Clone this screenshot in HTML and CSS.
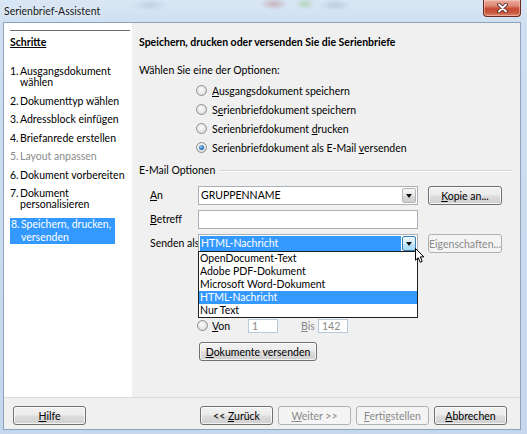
FILE: index.html
```html
<!DOCTYPE html>
<html lang="de">
<head>
<meta charset="utf-8">
<title>Serienbrief-Assistent</title>
<link rel="stylesheet" href="styles.css">
</head>
<body>
<div class="window">
  <div class="titlebar">
    <span class="title">Serienbrief-Assistent</span>
    <button class="close" aria-label="Schließen">
      <svg width="11" height="10" viewBox="0 0 11 10">
        <path d="M2 1.5 L9 8.5 M9 1.5 L2 8.5" stroke="#4a1c16" stroke-width="3.6" stroke-linecap="round"/>
        <path d="M2 1.5 L9 8.5 M9 1.5 L2 8.5" stroke="#ffffff" stroke-width="2" stroke-linecap="round"/>
      </svg>
    </button>
  </div>

  <div class="client">
    <div class="main">
      <nav class="steps">
        <div class="steps-head"><span>Schritte</span></div>
        <ol class="step-list">
          <li class="step"><span class="num">1.</span><span>Ausgangsdokument wählen</span></li>
          <li class="step"><span class="num">2.</span><span>Dokumenttyp wählen</span></li>
          <li class="step"><span class="num">3.</span><span>Adressblock einfügen</span></li>
          <li class="step"><span class="num">4.</span><span>Briefanrede erstellen</span></li>
          <li class="step disabled"><span class="num">5.</span><span>Layout anpassen</span></li>
          <li class="step"><span class="num">6.</span><span>Dokument vorbereiten</span></li>
          <li class="step"><span class="num">7.</span><span>Dokument personalisieren</span></li>
          <li class="step current"><span class="num">8.</span><span>Speichern, drucken,<br>versenden</span></li>
        </ol>
      </nav>

      <section class="page">
        <h1 class="page-title">Speichern, drucken oder versenden Sie die Serienbriefe</h1>
        <p class="prompt">Wählen Sie eine der Optionen:</p>
        <div class="options">
          <div class="radio"><span class="dot"></span><span><u>A</u>usgangsdokument speichern</span></div>
          <div class="radio"><span class="dot"></span><span>S<u>e</u>rienbriefdokument speichern</span></div>
          <div class="radio"><span class="dot"></span><span>Serienbriefdokument <u>d</u>rucken</span></div>
          <div class="radio"><span class="dot on"></span><span>Serienbriefdokument als E-Mail <u>v</u>ersenden</span></div>
        </div>

        <div class="legend">E-Mail Optionen</div>

        <div class="mail-grid">
          <span class="label"><u>A</u>n</span>
          <div class="combo">
            <span class="combo-text">GRUPPENNAME</span>
            <span class="arrow"></span>
          </div>
          <button class="btn"><u>K</u>opie an...</button>

          <span class="label"><u>B</u>etreff</span>
          <div class="textbox"></div>
          <span></span>

          <span class="label">Senden als</span>
          <div class="combo open">
            <span class="combo-text">HTML-Nachricht</span>
            <span class="arrow"></span>
            <ul class="dropdown">
              <li>OpenDocument-Text</li>
              <li>Adobe PDF-Dokument</li>
              <li>Microsoft Word-Dokument</li>
              <li class="sel">HTML-Nachricht</li>
              <li>Nur Text</li>
            </ul>
            <svg class="cursor" width="11" height="16" viewBox="0 0 11 16">
              <path d="M0.5 0.5 L0.5 12.2 L3.2 9.7 L5.2 14.3 L7.2 13.4 L5.3 8.9 L8.9 8.9 Z" fill="#fff" stroke="#000" stroke-width="1" stroke-linejoin="round"/>
            </svg>
          </div>
          <button class="btn" disabled>Eigenschaften...</button>
        </div>

        <div class="range">
          <div class="radio small"><span class="dot"></span><span><u>V</u>on</span></div>
          <span class="field">1</span>
          <span class="range-label"><u>B</u>is</span>
          <span class="field">142</span>
        </div>

        <button class="btn send"><u>D</u>okumente versenden</button>
      </section>
    </div>

    <div class="buttonbar">
      <button class="btn"><u>H</u>ilfe</button>
      <div class="nav-buttons">
        <button class="btn">&lt;&lt; <u>Z</u>urück</button>
        <button class="btn" disabled><u>W</u>eiter &gt;&gt;</button>
        <button class="btn" disabled><u>F</u>ertigstellen</button>
        <button class="btn"><u>A</u>bbrechen</button>
      </div>
    </div>
  </div>
</div>
</body>
</html>
```

FILE: styles.css
```css
* {
  box-sizing: border-box;
}

html,
body {
  margin: 0;
  padding: 0;
}

body {
  width: 527px;
  height: 434px;
  overflow: hidden;
  font-family: Lato, "Open Sans", sans-serif;
  font-size: 10.5px;
  color: #000;
}

u {
  text-decoration: underline;
  text-underline-offset: 1px;
}

/* window frame */
.window {
  width: 527px;
  height: 434px;
  display: flex;
  flex-direction: column;
  padding: 0 6px 4px 3px;
  background:
    radial-gradient(ellipse 14px 6px at 274px 4px, rgba(170, 90, 90, 0.35), transparent),
    radial-gradient(ellipse 10px 6px at 305px 4px, rgba(120, 190, 90, 0.35), transparent),
    radial-gradient(ellipse 18px 6px at 150px 5px, rgba(130, 150, 180, 0.25), transparent),
    radial-gradient(ellipse 16px 6px at 335px 5px, rgba(130, 150, 180, 0.3), transparent),
    linear-gradient(180deg, #d9e6f4 0%, #cfdff0 6%, #c9dbee 60%, #c4d7ec 100%);
}

.titlebar {
  position: relative;
  height: 22px;
  display: flex;
  align-items: center;
  flex: none;
}

.title {
  padding-left: 1px;
  padding-bottom: 1px;
  color: #1a1a1a;
  text-shadow: 0 0 6px rgba(255, 255, 255, 0.9);
}

.close {
  position: absolute;
  right: 0;
  top: 0;
  width: 38px;
  height: 17px;
  padding: 0;
  border: 1px solid #6b2a20;
  border-top: none;
  border-radius: 0 0 4px 4px;
  background: linear-gradient(180deg, #e9ab9c 0%, #dd8a78 35%, #c74a33 55%, #c85a40 80%, #e08a6c 100%);
  box-shadow: inset 0 0 0 1px rgba(255, 220, 210, 0.45);
  display: flex;
  align-items: center;
  justify-content: center;
}

/* client area */
.client {
  flex: 1;
  display: flex;
  flex-direction: column;
  border: 1px solid #8da3bd;
  background: #f0f0f0;
}

.main {
  flex: 1;
  display: flex;
}

/* roadmap */
.steps {
  width: 128px;
  flex: none;
  background: #fff;
  padding: 7px 2px 0 6px;
}

.steps-head {
  border-top: 1px solid #6b6b6b;
  padding-top: 5px;
  line-height: 12px;
  font-weight: bold;
  margin-bottom: 18px;
}

.steps-head span {
  text-decoration: underline;
  text-underline-offset: 1px;
}

.step-list {
  list-style: none;
  margin: 0;
  padding: 0;
}

.step {
  display: grid;
  grid-template-columns: 10px 1fr;
  line-height: 11px;
  margin-bottom: 7.5px;
  color: #000;
}

.step.disabled {
  color: #8c8c8c;
}

.step.current {
  width: fit-content;
  line-height: 13px;
  padding: 0 4px 0 1px;
  background: #3399ff;
  color: #fff;
}

/* page */
.page {
  flex: 1;
  padding: 13px 8px 0 7px;
}

.page-title {
  margin: 0;
  font-size: 10.5px;
  font-weight: bold;
  line-height: 12px;
}

.prompt {
  margin: 17px 0 0;
  line-height: 11px;
}

.options {
  margin-top: 5px;
  padding-left: 57px;
}

.radio {
  display: flex;
  align-items: center;
  gap: 5px;
  height: 19px;
}

.dot {
  position: relative;
  width: 11px;
  height: 11px;
  flex: none;
  border-radius: 50%;
  border: 1px solid #8e8f8f;
  background: radial-gradient(circle at 45% 40%, #fdfdfd 0%, #e6e6e6 55%, #cdcdcd 100%);
}

.dot.on::after {
  content: "";
  position: absolute;
  left: 2px;
  top: 2px;
  width: 5px;
  height: 5px;
  border-radius: 50%;
  background: radial-gradient(circle at 40% 35%, #9ad2f4 0%, #2f78c4 55%, #0f3f7a 100%);
}

.legend {
  display: flex;
  align-items: center;
  gap: 5px;
  margin-top: 8px;
  line-height: 11px;
}

.legend::after {
  content: "";
  flex: 1;
  border-top: 1px solid #d5d5d5;
  border-bottom: 1px solid #fff;
}

.mail-grid {
  display: grid;
  grid-template-columns: 38px 220px 74px;
  grid-auto-rows: 19px;
  column-gap: 10px;
  row-gap: 5px;
  margin: 10px 0 0 11px;
  align-items: center;
}

.label {
  line-height: 11px;
  white-space: nowrap;
}

.combo,
.textbox {
  position: relative;
  height: 19px;
  border: 1px solid #a9b0ba;
  background: #fff;
}

.combo {
  display: flex;
  align-items: stretch;
  padding: 1px;
}

.combo-text {
  flex: 1;
  padding-left: 1px;
  line-height: 15px;
}

.arrow {
  position: relative;
  width: 14px;
  flex: none;
  border: 1px solid #b5b5b5;
  border-radius: 2px;
  background: linear-gradient(180deg, #f6f6f6 0%, #e9e9e9 50%, #d9d9d9 51%, #cfcfcf 100%);
}

.arrow::after {
  content: "";
  position: absolute;
  left: 3px;
  top: 5px;
  border-left: 3.5px solid transparent;
  border-right: 3.5px solid transparent;
  border-top: 4px solid #111;
}

.combo.open .combo-text {
  background: #3399ff;
  color: #fff;
  margin-right: 1px;
}

.combo.open .arrow {
  border-color: #3c7fb1;
  background: linear-gradient(180deg, #eaf6fd 0%, #d9f0fc 50%, #bee6fd 51%, #a7d9f5 100%);
}

.dropdown {
  position: absolute;
  left: -1px;
  right: -1px;
  top: 16px;
  z-index: 2;
  margin: 0;
  padding: 0;
  list-style: none;
  border: 1px solid #1e1e1e;
  background: #fff;
}

.dropdown li {
  height: 13px;
  line-height: 13px;
  padding-left: 1px;
}

.dropdown li.sel {
  background: #3399ff;
  color: #fff;
}

.cursor {
  position: absolute;
  left: 216px;
  top: 13px;
  z-index: 3;
}

/* buttons */
.btn {
  height: 19px;
  padding: 0;
  font: inherit;
  color: #000;
  border: 1px solid #707070;
  border-radius: 3px;
  background: linear-gradient(180deg, #f2f2f2 0%, #ebebeb 48%, #dddddd 52%, #cfcfcf 100%);
  box-shadow: inset 0 0 0 1px rgba(255, 255, 255, 0.75);
  white-space: nowrap;
}

.btn:disabled {
  color: #8a8a8a;
  border-color: #adb2b5;
  background: #f4f4f4;
  box-shadow: none;
}

/* page range */
.range {
  display: flex;
  align-items: center;
  height: 15px;
  margin-top: 65px;
  padding-left: 58px;
}

.radio.small {
  width: 51px;
  height: 15px;
  gap: 4px;
}

.field {
  width: 30px;
  height: 14px;
  border: 1px solid #b8c9dc;
  background: #fff;
  color: #8a8a8a;
  line-height: 12px;
  padding-left: 3px;
}

.range-label {
  color: #8a8a8a;
  margin: 0 4px 0 23px;
  width: 13px;
}

.send {
  display: block;
  width: 118px;
  margin: 9px 0 0 60px;
}

/* bottom buttons */
.buttonbar {
  flex: none;
  height: 32px;
  border-top: 1px solid #dcdcdc;
  display: flex;
  align-items: flex-start;
  padding: 8px 13px 0 9px;
}

.buttonbar .btn {
  width: 73px;
}

.nav-buttons {
  margin-left: auto;
  display: flex;
  gap: 5px;
}
```
